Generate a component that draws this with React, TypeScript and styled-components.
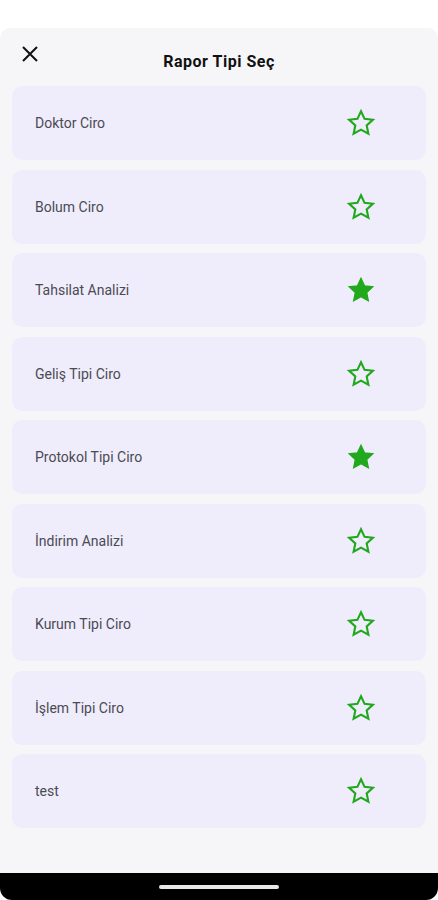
import { createGlobalStyle } from 'styled-components'
import styled from 'styled-components'

const GlobalStyle = createGlobalStyle`
	* { box-sizing: border-box; }
	body {
		margin: 0;
		background: #ffffff;
		font-family: Roboto, 'Noto Sans', sans-serif;
	}
`

const Screen = styled.div`
	width: 438px;
	height: 900px;
	display: flex;
	flex-direction: column;
	background: #ffffff;
`

const StatusSpace = styled.div`
	height: 28px;
	flex-shrink: 0;
`

const Sheet = styled.div`
	flex: 1;
	background: #f6f6f8;
	border-radius: 10px 10px 0 0;
	display: flex;
	flex-direction: column;
`

const Header = styled.div`
	position: relative;
	height: 58px;
	display: flex;
	align-items: center;
	justify-content: center;
	padding-top: 8px;
`

const CloseButton = styled.button`
	position: absolute;
	left: 18px;
	top: 14px;
	width: 24px;
	height: 24px;
	padding: 0;
	border: none;
	background: none;
	display: flex;
	align-items: center;
	justify-content: center;
`

const Title = styled.h1`
	margin: 0;
	font-size: 16px;
	font-weight: 700;
	color: #111111;
	letter-spacing: 0.5px;
`

const List = styled.ul`
	list-style: none;
	margin: 0;
	padding: 0 12px;
	display: flex;
	flex-direction: column;
	gap: 9.5px;
`

const Item = styled.li`
	height: 74px;
	border-radius: 10px;
	background: #efedfc;
	display: flex;
	align-items: center;
	justify-content: space-between;
	padding: 0 50px 0 23px;
`

const ItemLabel = styled.span`
	font-size: 14px;
	color: #4a4a52;
`

const HomeBar = styled.div`
	height: 27px;
	background: #000000;
	border-radius: 0 0 12px 12px;
	display: flex;
	align-items: center;
	justify-content: center;
	flex-shrink: 0;
`

const HomeIndicator = styled.div`
	width: 120px;
	height: 4px;
	border-radius: 2px;
	background: #e8e8e8;
`

const StarIcon = ({ filled }: { filled: boolean }) => (
	<svg width="30" height="30" viewBox="0 0 24 24">
		<path
			d="M12 2.6l2.85 6.1 6.65.75-4.95 4.55 1.35 6.6L12 17.3l-5.9 3.3 1.35-6.6L2.5 9.45l6.65-.75z"
			fill={filled ? '#22a81c' : 'none'}
			stroke="#22a81c"
			strokeWidth={filled ? 1 : 1.7}
			strokeLinejoin="miter"
		/>
	</svg>
)

const reports = [
	{ id: 1, title: 'Doktor Ciro', fav: false },
	{ id: 2, title: 'Bolum Ciro', fav: false },
	{ id: 3, title: 'Tahsilat Analizi', fav: true },
	{ id: 4, title: 'Geliş Tipi Ciro', fav: false },
	{ id: 5, title: 'Protokol Tipi Ciro', fav: true },
	{ id: 6, title: 'İndirim Analizi', fav: false },
	{ id: 7, title: 'Kurum Tipi Ciro', fav: false },
	{ id: 8, title: 'İşlem Tipi Ciro', fav: false },
	{ id: 9, title: 'test', fav: false },
]

const App = () => {
	return (
		<Screen>
			<GlobalStyle />
			<StatusSpace />
			<Sheet>
				<Header>
					<CloseButton>
						<svg width="20" height="20" viewBox="0 0 20 20">
							<path d="M3 3L17 17M17 3L3 17" stroke="#111" strokeWidth="2" />
						</svg>
					</CloseButton>
					<Title>Rapor Tipi Seç</Title>
				</Header>
				<List>
					{reports.map((x) => (
						<Item key={x.id}>
							<ItemLabel>{x.title}</ItemLabel>
							<StarIcon filled={x.fav} />
						</Item>
					))}
				</List>
			</Sheet>
			<HomeBar>
				<HomeIndicator />
			</HomeBar>
		</Screen>
	)
}

export default App
